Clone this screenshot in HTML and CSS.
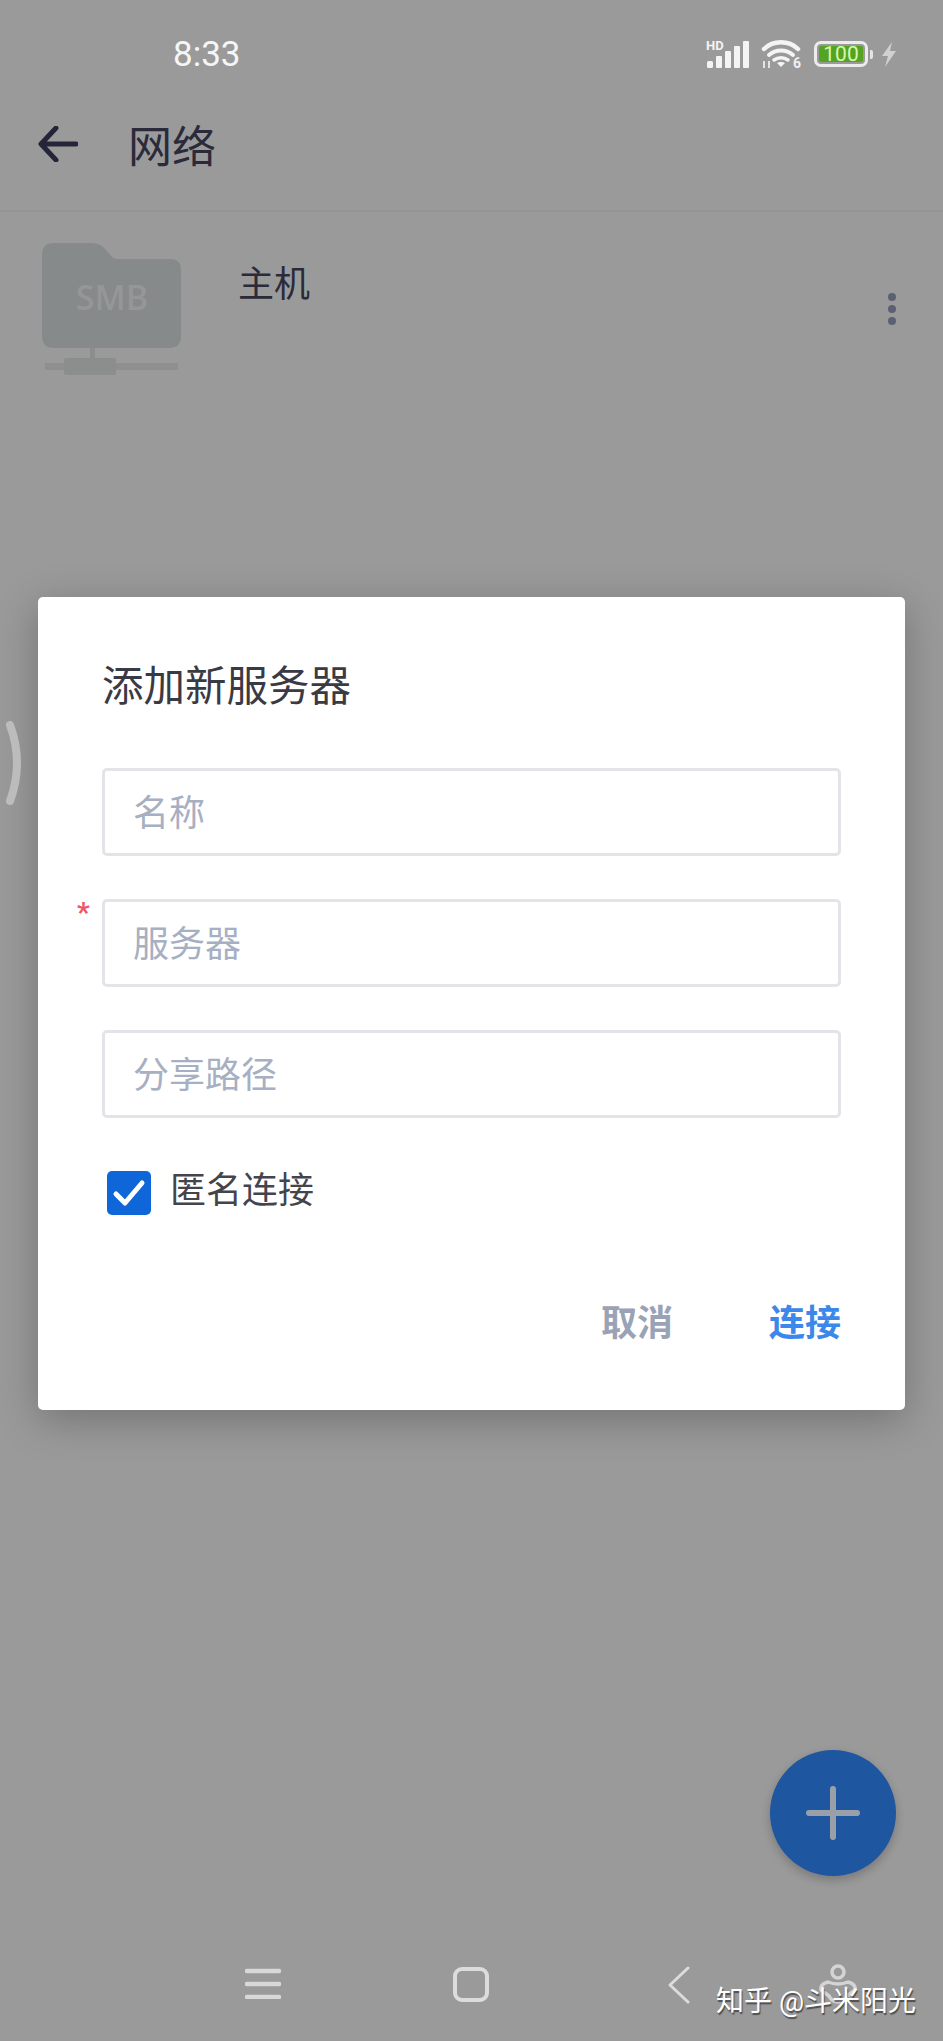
FILE: index.html
```html
<!DOCTYPE html>
<html lang="zh-CN">
<head>
    <meta charset="UTF-8">
    <meta name="viewport" content="width=device-width, initial-scale=1.0">
    <title>网络</title>
    <link rel="stylesheet" href="styles.css">
</head>
<body>
    <div class="page">
        <div class="status-bar">
            <span class="clock">8:33</span>
            <div class="status-icons">
                <div class="signal">
                    <span class="hd">HD</span>
                    <svg width="42" height="27" viewBox="0 0 42 27">
                        <g fill="#f4f4f4">
                            <rect x="0" y="20" width="6" height="7" rx="1.500"/>
                            <rect x="9" y="15" width="6" height="12" rx="1"/>
                            <rect x="18" y="10" width="6" height="17" rx="1"/>
                            <rect x="27" y="5" width="6" height="22" rx="1"/>
                            <rect x="36" y="0" width="6" height="27" rx="1"/>
                        </g>
                    </svg>
                </div>
                <div class="wifi">
                    <svg width="40" height="30" viewBox="0 0 40 30">
                        <g fill="none" stroke="#f4f4f4" stroke-linecap="round">
                            <path d="M3 10 C12 1 28 1 37 10" stroke-width="4.500"/>
                            <path d="M8 16 C15 10 25 10 32 16" stroke-width="4"/>
                            <path d="M13 21 C17 18 23 18 27 21" stroke-width="3.500"/>
                        </g>
                        <path d="M20 28 L16 24 C18 22.500 22 22.500 24 24 Z" fill="#f4f4f4"/>
                        <path d="M3 22 v7 M8 22 v7" stroke="#e4e4e4" stroke-width="2"/>
                    </svg>
                    <span class="wifi-six">6</span>
                </div>
                <div class="battery"><span class="battery-level">100</span></div>
                <span class="battery-cap"></span>
                <svg class="bolt" width="16" height="25" viewBox="0 0 16 25">
                    <path d="M11 0 L1 14 H7 L4 25 L15 9 H9 Z" fill="#d0d0d0"/>
                </svg>
            </div>
        </div>

        <header class="app-bar">
            <svg class="back-icon" width="40" height="36" viewBox="0 0 40 36">
                <path d="M18 2 L3 18 L18 34 M4 18 H38" fill="none" stroke="#25253a" stroke-width="5" stroke-linecap="round" stroke-linejoin="round"/>
            </svg>
            <h1>网络</h1>
        </header>

        <div class="server-row">
            <svg class="folder-icon" width="140" height="133" viewBox="0 0 140 133">
                <path d="M0 12 Q0 0 12 0 H50 Q58 0 63 6 L70 14 Q72 16 76 16 H128 Q139 16 139 27 V93 Q139 105 127 105 H12 Q0 105 0 93 Z" fill="#868a8a"/>
                <rect x="48" y="105" width="5" height="14" fill="#8c8e8e"/>
                <rect x="3" y="120" width="133" height="7" fill="#8e9090"/>
                <rect x="22" y="115" width="52" height="17" rx="2" fill="#8c8e8e"/>
                <text class="folder-label" x="70" y="67">SMB</text>
            </svg>
            <span class="server-name">主机</span>
            <div class="more-dots"><i></i><i></i><i></i></div>
        </div>

        <div class="dialog">
            <h2>添加新服务器</h2>
            <div class="field"><span>名称</span></div>
            <div class="field required"><span>服务器</span></div>
            <div class="field"><span>分享路径</span></div>
            <div class="check-row">
                <span class="checkbox">
                    <svg width="44" height="44" viewBox="0 0 44 44">
                        <path d="M9 23 L18 32 L35 12" fill="none" stroke="#fff" stroke-width="5" stroke-linecap="round" stroke-linejoin="round"/>
                    </svg>
                </span>
                <span class="check-label">匿名连接</span>
            </div>
            <div class="dialog-actions">
                <span class="btn-cancel">取消</span>
                <span class="btn-connect">连接</span>
            </div>
        </div>

        <svg class="side-handle" width="20" height="84" viewBox="0 0 20 84">
            <path d="M5 4 Q19 42 5 80" fill="none" stroke="#bcbcbc" stroke-width="8" stroke-linecap="round"/>
        </svg>

        <div class="fab">
            <svg width="54" height="54" viewBox="0 0 54 54">
                <path d="M27 3 V51 M3 27 H51" stroke="#9aa0aa" stroke-width="6" stroke-linecap="round"/>
            </svg>
        </div>

        <nav class="nav-bar">
            <svg class="nav-menu" width="36" height="32" viewBox="0 0 36 32">
                <path d="M2 4 H34 M2 17 H34 M2 30 H34" stroke="#d8d8d8" stroke-width="4.500" stroke-linecap="round"/>
            </svg>
            <span class="nav-home"></span>
            <svg class="nav-back" width="24" height="38" viewBox="0 0 24 38">
                <path d="M21 2 L3 19 L21 36" fill="none" stroke="#dcdcdc" stroke-width="3" stroke-linecap="round" stroke-linejoin="round"/>
            </svg>
            <svg class="nav-person" width="40" height="40" viewBox="0 0 40 40">
                <g fill="none" stroke="#d4d4d4" stroke-width="3.500">
                    <circle cx="20" cy="8" r="6"/>
                    <path d="M10 18 Q20 22 30 18 Q38 20 37 26 L29 32 Q26 38 20 38 Q14 38 11 32 L3 26 Q2 20 10 18 Z"/>
                </g>
            </svg>
        </nav>

        <div class="watermark">知乎 @斗米阳光</div>
    </div>
</body>
</html>
```

FILE: styles.css
```css
* {
    box-sizing: border-box;
}
body {
    margin: 0;
    padding: 0;
    font-family: Roboto, "Noto Sans CJK SC", sans-serif;
    background-color: #9a9a9a;
}
.page {
    position: relative;
    width: 943px;
    height: 2041px;
    overflow: hidden;
    background-color: #9a9a9a;
    display: flex;
    flex-direction: column;
}

/* status bar */
.status-bar {
    height: 78px;
    padding: 30px 46px 0 173px;
    display: flex;
    align-items: center;
    justify-content: space-between;
}
.clock {
    font-size: 35px;
    color: #f6f6f6;
}
.status-icons {
    display: flex;
    align-items: center;
}
.signal {
    position: relative;
    width: 42px;
    height: 27px;
    margin-right: 12px;
}
.signal svg {
    display: block;
}
.hd {
    position: absolute;
    left: -1px;
    top: -2px;
    font-size: 13px;
    line-height: 13px;
    font-weight: 700;
    color: #f4f4f4;
}
.wifi {
    position: relative;
    width: 40px;
    height: 30px;
    margin-right: 13px;
}
.wifi svg {
    display: block;
}
.wifi-six {
    position: absolute;
    right: 0;
    bottom: -1px;
    font-size: 14px;
    line-height: 14px;
    font-weight: 700;
    color: #f0f0f0;
}
.battery {
    width: 54px;
    height: 26px;
    padding: 2px;
    border: 3px solid #ececec;
    border-radius: 7px;
}
.battery-level {
    display: block;
    height: 100%;
    background-color: #55a41f;
    border-radius: 2px;
    color: #d6f7b0;
    font-size: 21px;
    line-height: 16px;
    text-align: center;
}
.battery-cap {
    width: 3px;
    height: 9px;
    margin: 0 8px 0 2px;
    background-color: #e4e4e4;
    border-radius: 0 2px 2px 0;
}

/* app bar */
.app-bar {
    height: 134px;
    padding-left: 38px;
    display: flex;
    align-items: center;
    border-bottom: 2px solid #949494;
}
.app-bar h1 {
    margin: 0 0 0 50px;
    font-size: 44px;
    font-weight: 400;
    color: #2a2a3a;
}

/* server list */
.server-row {
    padding: 31px 47px 0 42px;
    display: flex;
    align-items: flex-start;
}
.folder-label {
    font-family: "Open Sans", sans-serif;
    font-size: 34px;
    font-weight: 600;
    fill: #959797;
    text-anchor: middle;
}
.server-name {
    margin: 18px 0 0 56px;
    font-size: 36px;
    line-height: 48px;
    color: #2a2a38;
}
.more-dots {
    margin: 50px 0 0 auto;
    display: flex;
    flex-direction: column;
    gap: 4px;
}
.more-dots i {
    display: block;
    width: 8px;
    height: 8px;
    border-radius: 50%;
    background-color: #5b6173;
}

/* dialog */
.dialog {
    position: absolute;
    left: 38px;
    top: 597px;
    width: 867px;
    height: 813px;
    padding: 62px 64px 0;
    background-color: #fff;
    border-radius: 5px;
    box-shadow: 0 10px 40px rgba(0,0,0,0.25);
}
.dialog h2 {
    margin: 0 0 53px;
    font-size: 41.500px;
    line-height: 56px;
    font-weight: 400;
    color: #3a3a44;
}
.field {
    position: relative;
    height: 88px;
    margin-bottom: 43px;
    padding: 0 0 4px 28px;
    display: flex;
    align-items: center;
    border: 3px solid #e2e4e8;
    border-radius: 5px;
    font-size: 36px;
    color: #a7afc2;
}
.required::before {
    content: "*";
    position: absolute;
    left: -28px;
    top: -7px;
    font-size: 28px;
    line-height: 36px;
    font-weight: 700;
    color: #f0566a;
}
.check-row {
    margin: 53px 0 0 5px;
    display: flex;
    align-items: center;
    font-size: 36px;
    line-height: 40px;
    color: #44444c;
}
.check-label {
    margin-bottom: 4px;
}
.checkbox {
    width: 44px;
    height: 44px;
    margin-right: 19px;
    background-color: #0f66d8;
    border-radius: 5px;
}
.checkbox svg {
    display: block;
}
.dialog-actions {
    margin-top: 84px;
    display: flex;
    justify-content: flex-end;
    gap: 96px;
    font-size: 36px;
    line-height: 50px;
    font-weight: 700;
}
.btn-cancel {
    color: #9aa3b5;
}
.btn-connect {
    color: #3b87ea;
}

/* things on top of the page */
.side-handle {
    position: absolute;
    left: 5px;
    top: 721px;
}
.fab {
    position: absolute;
    left: 770px;
    top: 1750px;
    width: 126px;
    height: 126px;
    display: flex;
    align-items: center;
    justify-content: center;
    border-radius: 50%;
    background-color: #1f56a0;
    box-shadow: 0 4px 10px rgba(0,0,0,0.22);
}
.fab svg {
    display: block;
}
.watermark {
    position: absolute;
    left: 716px;
    top: 1983px;
    font-size: 28px;
    line-height: 38px;
    color: #fff;
    white-space: nowrap;
    text-shadow: 1px 2px 1px rgba(0,0,0,0.5);
}

/* bottom nav */
.nav-bar {
    margin-top: auto;
    height: 80px;
    position: relative;
    display: flex;
    align-items: flex-start;
    padding: 6px 0 0 245px;
}
.nav-home {
    width: 36px;
    height: 35px;
    margin-left: 172px;
    border: 4px solid #dcdcdc;
    border-radius: 9px;
}
.nav-back {
    margin: -1px 0 0 178px;
}
.nav-person {
    margin: -3px 0 0 127px;
}
```
